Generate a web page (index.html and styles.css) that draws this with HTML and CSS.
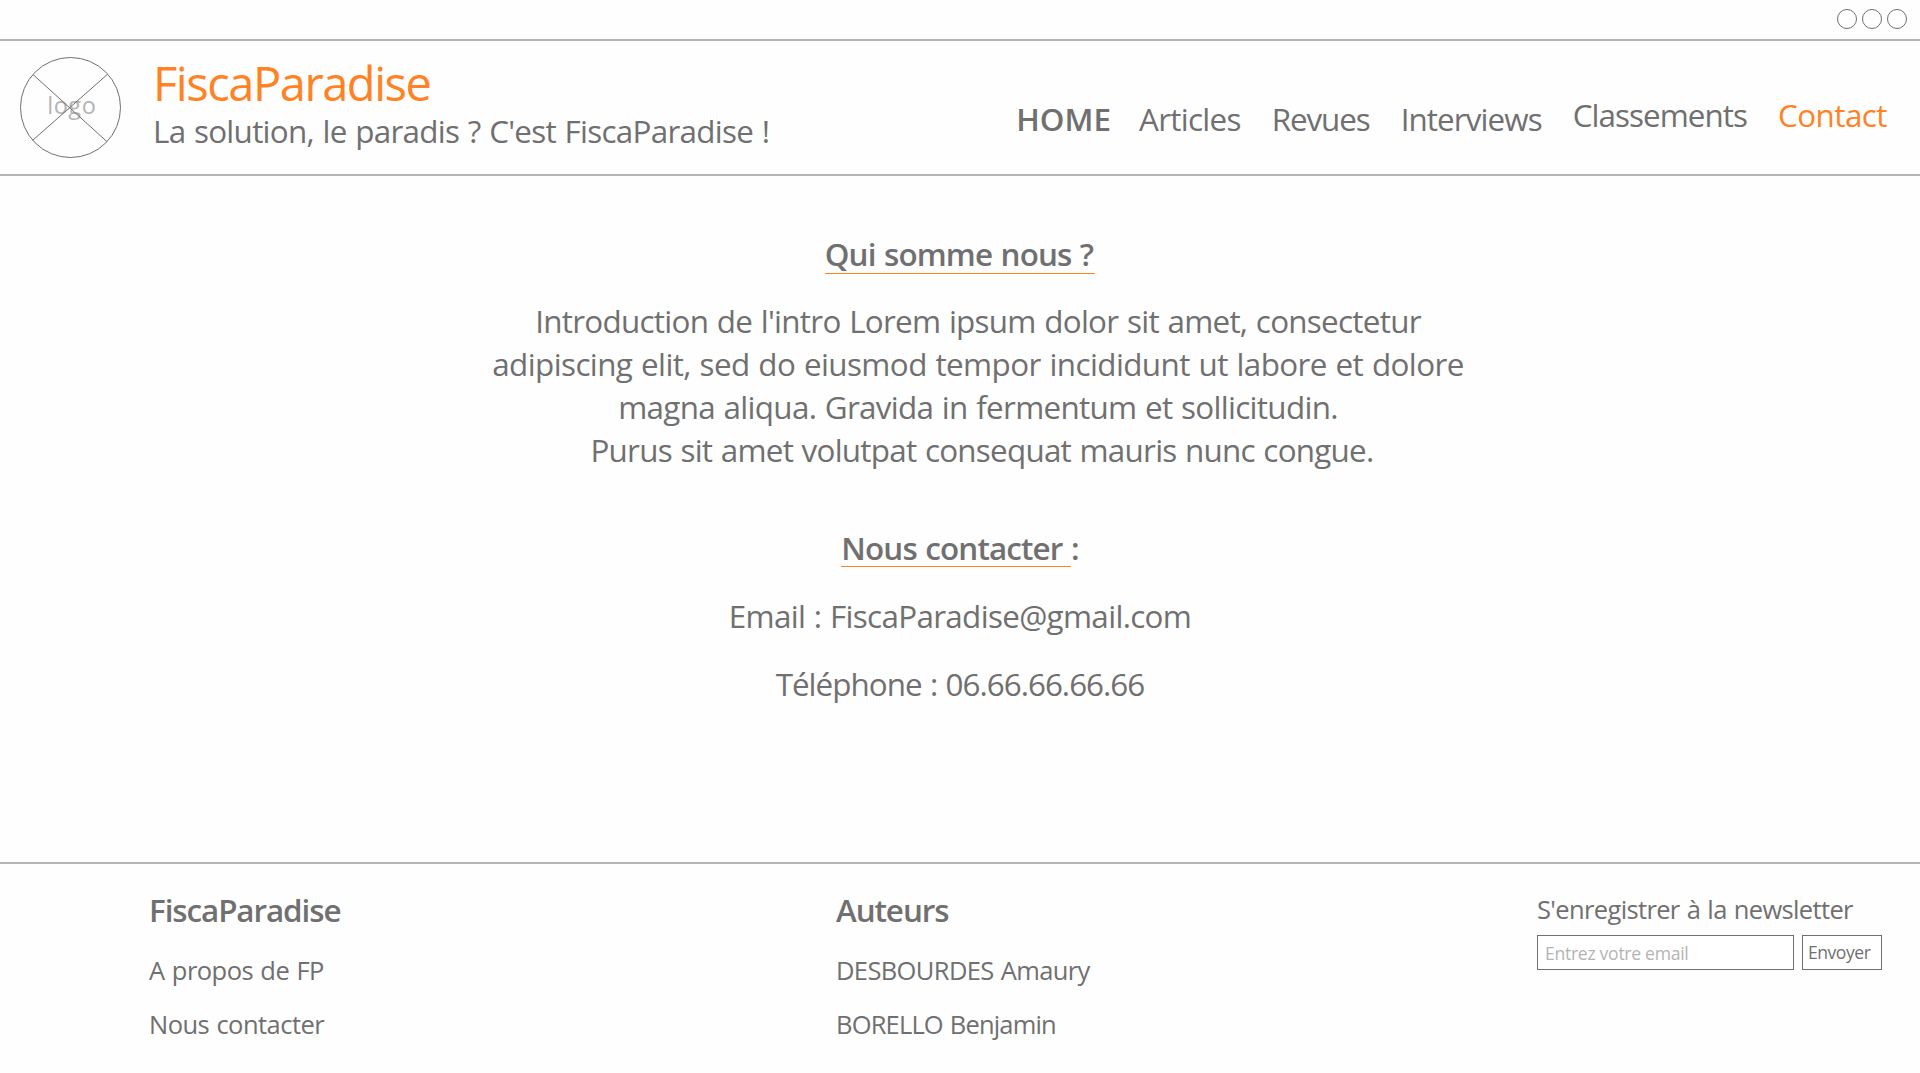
FILE: index.html
```html
<!DOCTYPE html>
<html lang="fr">
<head>
<meta charset="utf-8">
<title>FiscaParadise - Contact</title>
<link rel="stylesheet" href="styles.css">
</head>
<body>
<div class="window-bar">
  <i class="dot"></i><i class="dot"></i><i class="dot"></i>
</div>
<header class="header">
  <svg class="logo" viewBox="0 0 101 101" width="101" height="101">
    <text class="logo-text" x="27.3" y="57">logo</text>
    <g fill="none" stroke="#707070">
      <circle cx="50.5" cy="50.5" r="50"/>
      <path d="M13 17.5 87 84.7M87.5 17.3 12.7 83.3"/>
    </g>
  </svg>
  <div class="brand">
    <h1 class="title">FiscaParadise</h1>
    <p class="tagline">La solution, le paradis ? C'est FiscaParadise !</p>
  </div>
  <nav class="nav">
    <a class="home">HOME</a>
    <a class="articles">Articles</a>
    <a class="revues">Revues</a>
    <a class="interviews">Interviews</a>
    <a class="classements">Classements</a>
    <a class="contact">Contact</a>
  </nav>
</header>
<main class="main">
  <h2 class="heading about"><span class="underline">Qui somme nous ?</span></h2>
  <p class="intro">
    <span class="line line-1">Introduction de l'intro Lorem ipsum dolor sit amet, consectetur</span>
    <span class="line line-2">adipiscing elit, sed do eiusmod tempor incididunt ut labore et dolore</span>
    <span class="line line-3">magna aliqua. Gravida in fermentum et sollicitudin.</span>
    <span class="line line-4">Purus sit amet volutpat consequat mauris nunc congue.</span>
  </p>
  <h2 class="heading reach"><span class="underline">Nous contacter </span><span>:</span></h2>
  <p class="email">Email : FiscaParadise@gmail.com</p>
  <p class="phone">Téléphone : 06.66.66.66.66</p>
</main>
<footer class="footer">
  <section>
    <h3 class="footer-title">FiscaParadise</h3>
    <a class="footer-link tight-1">A propos de FP</a>
    <a class="footer-link tight-2">Nous contacter</a>
  </section>
  <section>
    <h3 class="footer-title">Auteurs</h3>
    <a class="footer-link tight-3">DESBOURDES Amaury</a>
    <a class="footer-link tight-4">BORELLO Benjamin</a>
  </section>
  <form class="newsletter">
    <label class="newsletter-label" for="email">S'enregistrer à la newsletter</label>
    <div class="fields">
      <input class="field" id="email" type="text" placeholder="Entrez votre email">
      <button class="send" type="button">Envoyer</button>
    </div>
  </form>
</footer>
</body>
</html>
```
FILE: styles.css
```css
* { box-sizing: border-box; margin: 0; padding: 0; }

body {
  width: 1920px;
  height: 1073px;
  display: flex;
  flex-direction: column;
  overflow: hidden;
  background: #fefefe;
  color: #707070;
  font: 400 31.4px/43px "Open Sans", sans-serif;
  word-spacing: 1.1px;
}

/* Window bar */
.window-bar {
  flex: none;
  height: 41px;
  display: flex;
  justify-content: flex-end;
  gap: 5px;
  padding: 9px 13px 0 0;
  border-bottom: 2px solid #b4b4b4;
}
.dot {
  width: 20px;
  height: 20px;
  border: 1px solid #707070;
  border-radius: 50%;
  background: #fff;
}

/* Header */
.header {
  flex: none;
  height: 135px;
  display: flex;
  align-items: flex-start;
  padding: 16px 33px 0 20px;
  border-bottom: 2px solid #b4b4b4;
}
.logo { flex: none; }
.logo-text { font-size: 23.5px; letter-spacing: 0.5px; fill: #b4b4b4; }
.brand { margin-left: 32px; white-space: nowrap; }
.title {
  color: #ff8224;
  font-size: 47px;
  font-weight: 400;
  line-height: 52px;
  letter-spacing: -1.449px;
}
.tagline { letter-spacing: -0.71px; }
.nav {
  display: flex;
  align-items: flex-start;
  gap: 31px;
  margin-left: auto;
  padding-top: 36px;
}
.nav a { margin-top: 4px; }
.nav .home { margin-right: -3px; font-weight: 600; }
.articles { letter-spacing: -0.697px; }
.revues { letter-spacing: -1.112px; }
.interviews { letter-spacing: -0.913px; }
.nav .classements { margin-top: 0; letter-spacing: -0.95px; }
.nav .contact { margin-top: 0; letter-spacing: -0.54px; color: #ff8224; }

/* Content */
.main {
  flex: none;
  height: 686px;
  display: flex;
  flex-direction: column;
  align-items: center;
  padding-top: 56px;
}
.heading {
  display: flex;
  font-size: 31.4px;
  font-weight: 600;
  letter-spacing: -0.85px;
  white-space: pre;
}
.underline { border-bottom: 1px solid #ff8224; }
.about { height: 42px; }
.about .underline { padding-right: 2px; }
.reach { height: 41px; margin: 55px 0 27px; }
.intro { margin-top: 25px; padding-left: 36px; text-align: center; }
.line { display: block; white-space: nowrap; }
.line-1 { letter-spacing: -0.715px; }
.line-2 { letter-spacing: -0.579px; }
.line-3 { letter-spacing: -0.688px; }
.line-4 { padding-left: 8px; letter-spacing: -0.746px; }
.email { letter-spacing: -0.67px; }
.phone { margin-top: 25px; letter-spacing: -0.97px; }

/* Footer */
.footer {
  flex: 1;
  display: grid;
  grid-template-columns: 687px 701px 345px;
  padding: 24px 0 0 149px;
  border-top: 2px solid #b4b4b4;
}
.footer-title {
  margin-bottom: 22px;
  font-size: 31.4px;
  font-weight: 600;
  letter-spacing: -1.08px;
}
.footer-link {
  display: block;
  margin-bottom: 20px;
  font-size: 25.5px;
  line-height: 34px;
}
.tight-1 { letter-spacing: -0.52px; }
.tight-2 { letter-spacing: -0.53px; }
.tight-3 { letter-spacing: -0.63px; }
.tight-4 { letter-spacing: -0.83px; }
.newsletter { padding-top: 4px; }
.newsletter-label {
  display: block;
  font-size: 25.5px;
  line-height: 34px;
  letter-spacing: -0.64px;
}
.fields { display: flex; gap: 8px; margin-top: 9px; }
.field, .send {
  height: 35px;
  border: 1px solid #707070;
  background: #fff;
  color: #707070;
  font: 400 17.6px/24px "Open Sans", sans-serif;
}
.field { width: 257px; padding: 5px 7px 4px; letter-spacing: -0.3px; }
.field::placeholder { color: #b4b4b4; opacity: 1; }
.send { width: 80px; padding: 0 0 2px 5px; text-align: left; letter-spacing: -0.5px; }
```
